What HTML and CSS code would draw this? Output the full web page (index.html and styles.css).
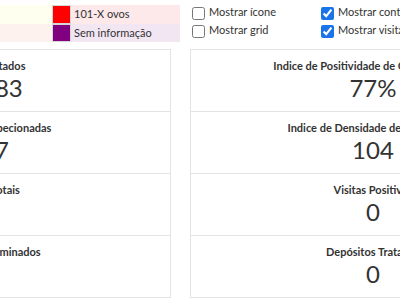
FILE: index.html
```html
<!DOCTYPE html>
<html lang="pt-BR">
<head>
    <meta charset="UTF-8">
    <meta name="viewport" content="width=device-width, initial-scale=1.0">
    <title>Painel de Ovitrampas</title>
    <link rel="stylesheet" href="styles.css">
</head>
<body>
    <div class="page">
        <div class="toolbar">
            <div class="legend">
                <div class="legend-item level-3"><span class="swatch"></span><span class="legend-label">1-100</span></div>
                <div class="legend-item level-0"><span class="swatch"></span><span class="legend-label">0</span></div>
                <div class="legend-item level-4"><span class="swatch"></span><span class="legend-label">101-X ovos</span></div>
                <div class="legend-item no-data"><span class="swatch"></span><span class="legend-label">Sem informação</span></div>
            </div>
            <div class="options">
                <label class="option"><input type="checkbox"><span>Mostrar ícone</span></label>
                <label class="option"><input type="checkbox" checked><span>Mostrar contagem</span></label>
                <label class="option"><input type="checkbox"><span>Mostrar grid</span></label>
                <label class="option"><input type="checkbox" checked><span>Mostrar visitas</span></label>
            </div>
        </div>

        <div class="cards">
            <div class="card">
                <div class="stat">
                    <div class="stat-title">Ovos Contados</div>
                    <div class="stat-value">12583</div>
                </div>
                <div class="stat">
                    <div class="stat-title">Armadilhas Inspecionadas</div>
                    <div class="stat-value">157</div>
                </div>
                <div class="stat">
                    <div class="stat-title">Visitas Totais</div>
                    <div class="stat-value">0</div>
                </div>
                <div class="stat">
                    <div class="stat-title">Depósitos Eliminados</div>
                    <div class="stat-value">0</div>
                </div>
            </div>
            <div class="card">
                <div class="stat">
                    <div class="stat-title">Indice de Positividade de Ovitrampas (%)</div>
                    <div class="stat-value">77%</div>
                </div>
                <div class="stat">
                    <div class="stat-title">Indice de Densidade de Ovos (IDO)</div>
                    <div class="stat-value">104</div>
                </div>
                <div class="stat">
                    <div class="stat-title">Visitas Positivas</div>
                    <div class="stat-value">0</div>
                </div>
                <div class="stat">
                    <div class="stat-title">Depósitos Tratados</div>
                    <div class="stat-value">0</div>
                </div>
            </div>
        </div>
    </div>
</body>
</html>
```

FILE: styles.css
```css
body {
    margin: 0;
    padding: 0;
    font-family: Lato, "Open Sans", sans-serif;
    color: #333;
    background-color: white;
    overflow: hidden;
}
/* the view is scrolled sideways, the page starts off screen */
.page {
    width: 760px;
    margin-left: -195px;
}
.toolbar {
    display: flex;
    align-items: flex-start;
    height: 49px;
}
.legend {
    display: grid;
    grid-template-rows: 19px 18px;
    grid-auto-flow: column;
    grid-auto-columns: 128px;
    margin: 5px 0 0 119px;
}
.legend-item {
    display: flex;
}
.swatch {
    width: 19px;
    box-sizing: border-box;
    border: 1px solid #d6d6d6;
}
.legend-label {
    flex: 1;
    padding-left: 3px;
    font-size: 11px;
    line-height: 18px;
}
.level-0 .legend-label { background-color: #fdf2ee; }
.level-0 .swatch { background-color: #f08060; }
.level-3 .legend-label { background-color: #fffff0; }
.level-3 .swatch { background-color: #ffff00; }
.level-4 .legend-label { background-color: #fde9ea; }
.level-4 .swatch { background-color: #ff0000; }
.no-data .legend-label { background-color: #f3e6f3; }
.no-data .swatch { background-color: #800080; }

.options {
    display: grid;
    grid-template-columns: 129px 129px;
    grid-auto-rows: 18px;
    margin: 4px 0 0 8px;
}
.option {
    display: flex;
    align-items: flex-start;
    font-size: 11px;
    line-height: 16px;
    white-space: nowrap;
}
.option input {
    width: 13px;
    height: 13px;
    margin: 3px 4px 2px 4px;
    accent-color: #1a73e8;
}

.cards {
    display: grid;
    grid-template-columns: 366px 366px;
    gap: 19px;
}
.card {
    border: 1px solid #e3e3e3;
    border-top: none;
}
.stat {
    height: 62px;
    box-sizing: border-box;
    border-top: 1px solid #e3e3e3;
    padding-top: 9px;
    text-align: center;
}
.stat-title {
    font-size: 11px;
    font-weight: bold;
    line-height: 14px;
    white-space: nowrap;
}
.stat-value {
    margin-top: 1px;
    font-size: 24px;
    line-height: 28px;
}
```
